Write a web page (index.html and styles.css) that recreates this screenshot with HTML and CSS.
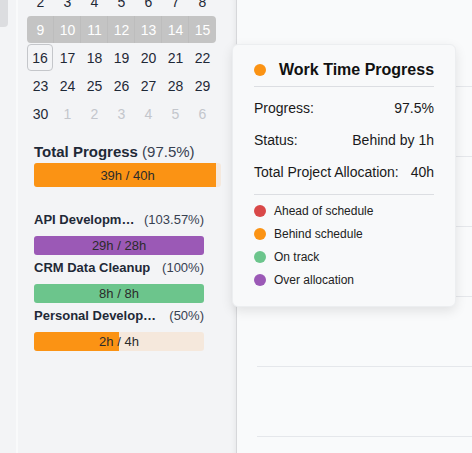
FILE: index.html
```html
<!doctype html>
<html>
	<head>
		<meta charset="utf-8" />
		<title>Work Time</title>
		<link rel="stylesheet" href="styles.css">
	</head>
	<body>
		<div class="rail"><div class="thumb"></div></div>

		<aside class="sidebar">
			<div class="calendar">
				<span>2</span><span>3</span><span>4</span><span>5</span><span>6</span><span>7</span><span>8</span>
				<span class="week first">9</span><span class="week">10</span><span class="week">11</span><span class="week">12</span><span class="week">13</span><span class="week">14</span><span class="week last">15</span>
				<span class="today">16</span><span>17</span><span>18</span><span>19</span><span>20</span><span>21</span><span>22</span>
				<span>23</span><span>24</span><span>25</span><span>26</span><span>27</span><span>28</span><span>29</span>
				<span>30</span><span class="other">1</span><span class="other">2</span><span class="other">3</span><span class="other">4</span><span class="other">5</span><span class="other">6</span>
			</div>

			<section class="progress">
				<div class="total-title"><b>Total Progress</b> (97.5%)</div>
				<div class="bar total orange"><div class="fill" style="width: 97.5%"></div><span>39h / 40h</span></div>

				<div class="project">
					<div class="project-head"><b>API Development</b><span>(103.57%)</span></div>
					<div class="bar purple"><div class="fill" style="width: 100%"></div><span>29h / 28h</span></div>
				</div>
				<div class="project">
					<div class="project-head"><b>CRM Data Cleanup</b><span>(100%)</span></div>
					<div class="bar green"><div class="fill" style="width: 100%"></div><span>8h / 8h</span></div>
				</div>
				<div class="project">
					<div class="project-head"><b>Personal Development</b><span>(50%)</span></div>
					<div class="bar orange"><div class="fill" style="width: 50%"></div><span>2h / 4h</span></div>
				</div>
			</section>
		</aside>

		<main class="grid">
			<div class="slot"></div>
			<div class="slot"></div>
			<div class="slot"></div>
			<div class="slot"></div>
			<div class="slot"></div>
			<div class="slot"></div>
		</main>

		<div class="tooltip">
			<h2><i class="dot orange"></i>Work Time Progress</h2>
			<dl>
				<div><dt>Progress:</dt><dd>97.5%</dd></div>
				<div><dt>Status:</dt><dd>Behind by 1h</dd></div>
				<div><dt>Total Project Allocation:</dt><dd>40h</dd></div>
			</dl>
			<ul class="legend">
				<li><i class="dot red"></i>Ahead of schedule</li>
				<li><i class="dot orange"></i>Behind schedule</li>
				<li><i class="dot green"></i>On track</li>
				<li><i class="dot purple"></i>Over allocation</li>
			</ul>
		</div>
	</body>
</html>
```

FILE: styles.css
```css
body {
	margin: 0;
	height: 453px;
	overflow: hidden;
	display: flex;
	font-family: "Liberation Sans", Arial, sans-serif;
	color: #1f2937;
	background: #f9fafb;
}

.rail {
	width: 16px;
	flex: none;
	background: #f3f4f6;
	border-right: 2px solid #f9fafb;
}

.thumb {
	width: 8px;
	height: 27px;
	background: #dcdde0;
	border-bottom-right-radius: 4px;
}

.sidebar {
	width: 218px;
	flex: none;
	background: #f3f4f6;
	border-right: 1px solid #d6d7da;
	box-shadow: inset -6px 0 6px -6px rgba(0, 0, 0, .08);
}

.calendar {
	display: grid;
	grid-template-columns: repeat(7, 27px);
	grid-auto-rows: 27px;
	row-gap: 1px;
	margin: -12px 0 0 9px;
	font-size: 14px;
}

.calendar span {
	display: flex;
	align-items: center;
	justify-content: center;
}

.calendar .week {
	background: #c4c4c4;
	color: #fff;
	box-shadow: inset -1px 0 0 #bdbdbd;
}

.calendar .first {
	border-radius: 4px 0 0 4px;
}

.calendar .last {
	border-radius: 0 4px 4px 0;
	box-shadow: none;
}

.calendar .today {
	border: 1px solid #c4c6ca;
	border-radius: 4px;
	margin-right: 1px;
}

.calendar .other {
	color: #c3c6cc;
}

.progress {
	padding: 16px 32px 0 16px;
}

.total-title {
	font-size: 15px;
	line-height: 17px;
	color: #374151;
	margin-bottom: 3px;
}

.total-title b {
	color: #1f2937;
}

.bar {
	position: relative;
	height: 19px;
	border-radius: 3px;
	overflow: hidden;
	font-size: 13px;
	display: flex;
	align-items: center;
	justify-content: center;
	color: #2b2b2b;
}

.bar.total {
	height: 24px;
	width: 187px;
	margin-bottom: 25px;
}

.bar .fill {
	position: absolute;
	left: 0;
	top: 0;
	bottom: 0;
}

.bar span {
	position: relative;
}

.bar.orange { background: #f5e8dc; }
.bar.orange .fill { background: #fb9314; }
.bar.purple .fill { background: #9b59b6; }
.bar.green .fill { background: #6cc58c; }

.project {
	margin-bottom: 5px;
}

.project-head {
	display: flex;
	justify-content: space-between;
	gap: 8px;
	font-size: 13px;
	line-height: 16px;
	margin-bottom: 8px;
	color: #374151;
}

.project-head b {
	color: #1f2937;
	white-space: nowrap;
	overflow: hidden;
	text-overflow: ellipsis;
}

.project-head span {
	flex: none;
}

.grid {
	flex: 1;
	padding: 17px 0 0 20px;
}

.slot {
	height: 69px;
	border-bottom: 1px solid #e5e7eb;
}

.tooltip {
	position: absolute;
	left: 232px;
	top: 44px;
	width: 224px;
	height: 263px;
	box-sizing: border-box;
	padding: 15px 21px 0;
	background: #f8f9fa;
	border: 1px solid #eceef0;
	border-radius: 6px;
	box-shadow: 0 4px 12px rgba(0, 0, 0, .1);
}

.tooltip h2 {
	margin: 0;
	font-size: 16px;
	line-height: 20px;
	white-space: nowrap;
	color: #111;
	display: flex;
	align-items: center;
	gap: 13px;
	padding-bottom: 6px;
	border-bottom: 1px solid #dcdee2;
}

.dot {
	width: 12px;
	height: 12px;
	border-radius: 50%;
	flex: none;
}

.dot.orange { background: #fb9314; }
.dot.red { background: #d94848; }
.dot.green { background: #6cc58c; }
.dot.purple { background: #9b59b6; }

.tooltip dl {
	margin: 5px 0 0;
	padding-bottom: 6px;
	border-bottom: 1px solid #dcdee2;
	font-size: 14px;
	color: #1a1a1a;
}

.tooltip dl div {
	display: flex;
	justify-content: space-between;
	align-items: center;
	height: 32px;
}

.tooltip dd {
	margin: 0;
}

.legend {
	list-style: none;
	margin: 4px 0 0;
	padding: 0;
	font-size: 12px;
	color: #222;
}

.legend li {
	display: flex;
	align-items: center;
	gap: 8px;
	height: 23px;
}
```
